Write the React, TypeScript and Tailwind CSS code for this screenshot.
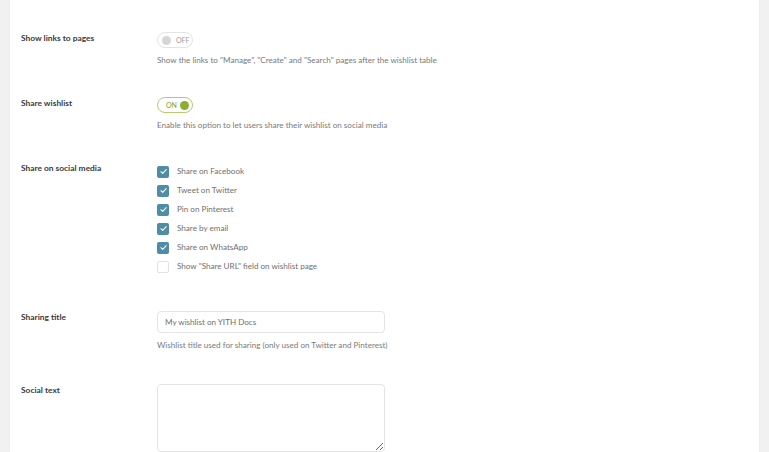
import React from "react";

const font = { fontFamily: 'Lato, "Noto Sans", sans-serif' };

const Toggle = ({ on }: { on: boolean }) =>
  on ? (
    <div className="flex h-[16px] w-[36px] items-center justify-between rounded-full border border-[#b4cc6e] bg-white pl-[8px] pr-[3px]">
      <span className="text-[7px] leading-none text-[#7f9e2c]">ON</span>
      <span className="h-[9px] w-[9px] rounded-full bg-[#8cb02b]" />
    </div>
  ) : (
    <div className="flex h-[16px] w-[36px] items-center gap-[5px] rounded-full border border-[#e3e3e3] bg-white pl-[4px]">
      <span className="h-[9px] w-[9px] rounded-full bg-[#d6d6d6]" />
      <span className="text-[7px] leading-none text-[#9a9a9a]">OFF</span>
    </div>
  );

const Check = ({ checked, label }: { checked: boolean; label: string }) => (
  <div className="flex h-[19px] items-center gap-[8px]">
    {checked ? (
      <span className="flex h-[12px] w-[12px] items-center justify-center rounded-[2px] bg-[#4f8ca6]">
        <svg viewBox="0 0 12 12" className="h-[9px] w-[9px]" fill="none">
          <path d="M2.5 6.3 L5 8.6 L9.6 3.4" stroke="white" strokeWidth="1.4" strokeLinecap="round" strokeLinejoin="round" />
        </svg>
      </span>
    ) : (
      <span className="h-[12px] w-[12px] rounded-[2px] border border-[#e2e2e2] bg-white" />
    )}
    <span className="text-[8.1px] text-[#6f6f6f]">{label}</span>
  </div>
);

const Row = ({
  label,
  className,
  children,
}: {
  label: string;
  className?: string;
  children: React.ReactNode;
}) => (
  <div className={"flex " + (className ?? "")}>
    <div className="w-[136px] shrink-0 text-[8.4px] font-bold leading-[13px] text-[#3a3a3a]">
      {label}
    </div>
    <div className="flex-1">{children}</div>
  </div>
);

const Desc = ({ children }: { children: React.ReactNode }) => (
  <p className="mt-[5px] text-[8.1px] leading-[14px] text-[#7a7a7a]">{children}</p>
);

export default function App() {
  return (
    <div className="flex h-[452px] w-full overflow-hidden bg-[#f1f1f1]" style={font}>
      <div className="ml-[10px] mr-[10px] flex-1 bg-white pl-[11px] pt-[32px] shadow-[0_0_2px_rgba(0,0,0,0.06)]">
        <Row label="Show links to pages">
          <Toggle on={false} />
          <Desc>Show the links to "Manage", "Create" and "Search" pages after the wishlist table</Desc>
        </Row>

        <Row label="Share wishlist" className="mt-[30px]">
          <Toggle on />
          <Desc>Enable this option to let users share their wishlist on social media</Desc>
        </Row>

        <Row label="Share on social media" className="mt-[30px]">
          <div>
            <Check checked label="Share on Facebook" />
            <Check checked label="Tweet on Twitter" />
            <Check checked label="Pin on Pinterest" />
            <Check checked label="Share by email" />
            <Check checked label="Share on WhatsApp" />
            <Check checked={false} label='Show "Share URL" field on wishlist page' />
          </div>
        </Row>

        <Row label="Sharing title" className="mt-[35px]">
          <input
            type="text"
            defaultValue="My wishlist on YITH Docs"
            className="block h-[22px] w-[228px] rounded-[4px] border border-[#e4e4e4] px-[7px] text-[8.1px] text-[#6f6f6f] outline-none"
            style={font}
          />
          <Desc>Wishlist title used for sharing (only used on Twitter and Pinterest)</Desc>
        </Row>

        <Row label="Social text" className="mt-[32px]">
          <textarea
            className="block h-[68px] w-[228px] rounded-[4px] border border-[#e4e4e4] outline-none"
            style={font}
          />
        </Row>
      </div>
    </div>
  );
}
